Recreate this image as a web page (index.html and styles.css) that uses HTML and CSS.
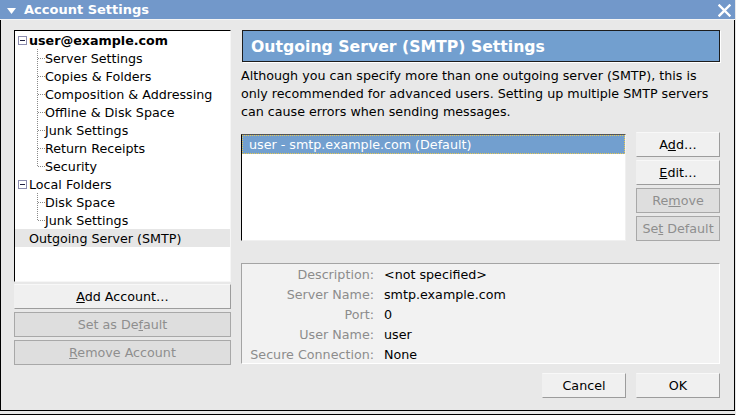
FILE: index.html
```html
<!DOCTYPE html>
<html>
<head>
<meta charset="utf-8">
<title>Account Settings</title>
<link rel="stylesheet" href="styles.css">
</head>
<body>
<div class="window">
  <div class="titlebar">
    <svg class="menu-arrow" width="9" height="6" viewBox="0 0 9 6"><polygon points="0,0 9,0 4.5,6" fill="#fff"/></svg>
    <span class="title">Account Settings</span>
    <svg class="close" width="13" height="13" viewBox="0 0 13 13"><path d="M1.5 1.5 L11.5 11.5 M11.5 1.5 L1.5 11.5" stroke="#fff" stroke-width="2.4" stroke-linecap="square"/></svg>
  </div>
  <div class="frame">
    <div class="left">
      <div class="tree">
        <div class="row root"><span class="expander"></span><span class="strong">user@example.com</span></div>
        <div class="row child"><span class="guide"></span>Server Settings</div>
        <div class="row child"><span class="guide"></span>Copies &amp; Folders</div>
        <div class="row child"><span class="guide"></span>Composition &amp; Addressing</div>
        <div class="row child"><span class="guide"></span>Offline &amp; Disk Space</div>
        <div class="row child"><span class="guide"></span>Junk Settings</div>
        <div class="row child"><span class="guide"></span>Return Receipts</div>
        <div class="row child"><span class="guide last"></span>Security</div>
        <div class="row root"><span class="expander"></span><span>Local Folders</span></div>
        <div class="row child"><span class="guide"></span>Disk Space</div>
        <div class="row child"><span class="guide last"></span>Junk Settings</div>
        <div class="row leaf current">Outgoing Server (SMTP)</div>
      </div>
      <button class="btn first"><u>A</u>dd Account…</button>
      <button class="btn disabled">Set as De<u>f</u>ault</button>
      <button class="btn disabled"><u>R</u>emove Account</button>
    </div>
    <div class="right">
      <div class="header">Outgoing Server (SMTP) Settings</div>
      <p class="intro">Although you can specify more than one outgoing server (SMTP), this is<br>only recommended for advanced users. Setting up multiple SMTP servers<br>can cause errors when sending messages.</p>
      <div class="servers">
        <div class="list">
          <div class="item selected">user - smtp.example.com (Default)</div>
        </div>
        <div class="side">
          <button class="btn">A<u>d</u>d…</button>
          <button class="btn"><u>E</u>dit…</button>
          <button class="btn disabled">Re<u>m</u>ove</button>
          <button class="btn disabled">Se<u>t</u> Default</button>
        </div>
      </div>
      <div class="details">
        <span class="label">Description:</span><span class="value">&lt;not specified&gt;</span>
        <span class="label">Server Name:</span><span class="value">smtp.example.com</span>
        <span class="label">Port:</span><span class="value">0</span>
        <span class="label">User Name:</span><span class="value">user</span>
        <span class="label">Secure Connection:</span><span class="value">None</span>
      </div>
      <div class="dialog-buttons">
        <button class="btn">Cancel</button>
        <button class="btn">OK</button>
      </div>
    </div>
  </div>
</div>
</body>
</html>
```

FILE: styles.css
```css
html, body {
  margin: 0;
  padding: 0;
}
body {
  background: #e8e8e8;
  font-family: "DejaVu Sans", "Liberation Sans", sans-serif;
  font-size: 12.7px;
  color: #000;
}
.window {
  width: 735px;
  height: 415px;
  box-sizing: border-box;
  border-bottom: 1px solid #000;
  padding-bottom: 3px;
  display: flex;
  flex-direction: column;
}
.titlebar {
  height: 19px;
  flex: none;
  border-bottom: 1px solid #f4f4f4;
  background: #7298ca;
  display: flex;
  align-items: center;
  padding-left: 7px;
  padding-right: 4px;
  color: #fff;
  font-weight: bold;
  font-size: 13px;
}
.menu-arrow {
  margin-top: 2px;
}
.title {
  margin-left: 8px;
  flex: 1;
}
.close {
  margin-top: 1px;
}
.frame {
  flex: 1;
  border: 1px solid #000;
  border-top: 0;
  display: flex;
  gap: 10px;
  padding: 10px 14px 0 13px;
}
.left {
  width: 217px;
  display: flex;
  flex-direction: column;
}
.tree {
  height: 252px;
  box-sizing: border-box;
  background: #fff;
  border: 1px solid;
  border-color: #000 #f6f6f6 #f6f6f6 #000;
  padding-top: 0;
}
.row {
  height: 18px;
  display: flex;
  align-items: center;
  white-space: nowrap;
}
.root {
  padding-left: 3px;
}
.strong {
  font-weight: bold;
}
.expander {
  width: 9px;
  height: 9px;
  box-sizing: border-box;
  border: 1px solid #8c8cae;
  margin-right: 2px;
  background: linear-gradient(#202040, #202040) no-repeat 1px 3px / 5px 1px, #fff;
}
.child {
  padding-left: 22px;
}
.guide {
  width: 8px;
  height: 18px;
  background-image:
    repeating-linear-gradient(to bottom, #8a8a8a 0 1px, transparent 1px 2px),
    repeating-linear-gradient(to right, #8a8a8a 0 1px, transparent 1px 2px);
  background-size: 1px 100%, 7px 1px;
  background-position: 0 0, 1px 9px;
  background-repeat: no-repeat;
}
.guide.last {
  background-size: 1px 10px, 7px 1px;
}
.leaf {
  padding-left: 14px;
}
.current {
  background: #e6e6e6;
}
.btn {
  height: 25px;
  box-sizing: border-box;
  border: 1px solid;
  border-color: #f8f8f8 #9c9c9c #9c9c9c #f0f0f0;
  background: #f0f0f0;
  font: inherit;
  color: #000;
  padding: 0;
  margin: 0;
}
.btn.disabled {
  background: #dedede;
  color: #8e8e8e;
  border-color: #a8a8a8;
}
.left .btn {
  margin-top: 3px;
}
.left .btn.first {
  margin-top: 2px;
}
.right {
  width: 479px;
  display: flex;
  flex-direction: column;
}
.header {
  margin-left: 1px;
  height: 32px;
  box-sizing: border-box;
  border: 1px solid #1c1c1c;
  box-shadow: 1px 1px 0 #fff;
  background: #729fcf;
  color: #fff;
  font-weight: bold;
  font-size: 15.7px;
  padding-left: 8px;
  display: flex;
  align-items: center;
}
.intro {
  margin: 5px 0 0;
  line-height: 18px;
  white-space: nowrap;
}
.servers {
  margin-top: 11px;
  display: flex;
  gap: 10px;
}
.list {
  width: 385px;
  height: 107px;
  margin-top: 2px;
  box-sizing: border-box;
  background: #fff;
  border: 1px solid;
  border-color: #555 #f0f0f0 #f0f0f0 #000;
}
.item {
  height: 19px;
  box-sizing: border-box;
  display: flex;
  align-items: center;
  padding-left: 7px;
  white-space: nowrap;
}
.item.selected {
  background: #729fcf;
  color: #fff;
  border: 1px dotted #e8c850;
  padding-left: 6px;
}
.side {
  width: 84px;
  display: flex;
  flex-direction: column;
  gap: 3px;
}
.details {
  margin-top: 22px;
  height: 101px;
  box-sizing: border-box;
  background: #f2f2f2;
  border: 1px solid;
  border-color: #a4a4a4 #fff #fff #a4a4a4;
  display: grid;
  grid-template-columns: 132px 1fr;
  column-gap: 10px;
  grid-auto-rows: 20px;
  align-items: center;
}
.label {
  text-align: right;
  color: #8c8c8c;
  white-space: nowrap;
}
.value {
  white-space: nowrap;
}
.dialog-buttons {
  margin-top: 9px;
  display: flex;
  justify-content: flex-end;
  gap: 10px;
}
.dialog-buttons .btn {
  width: 84px;
}
```
